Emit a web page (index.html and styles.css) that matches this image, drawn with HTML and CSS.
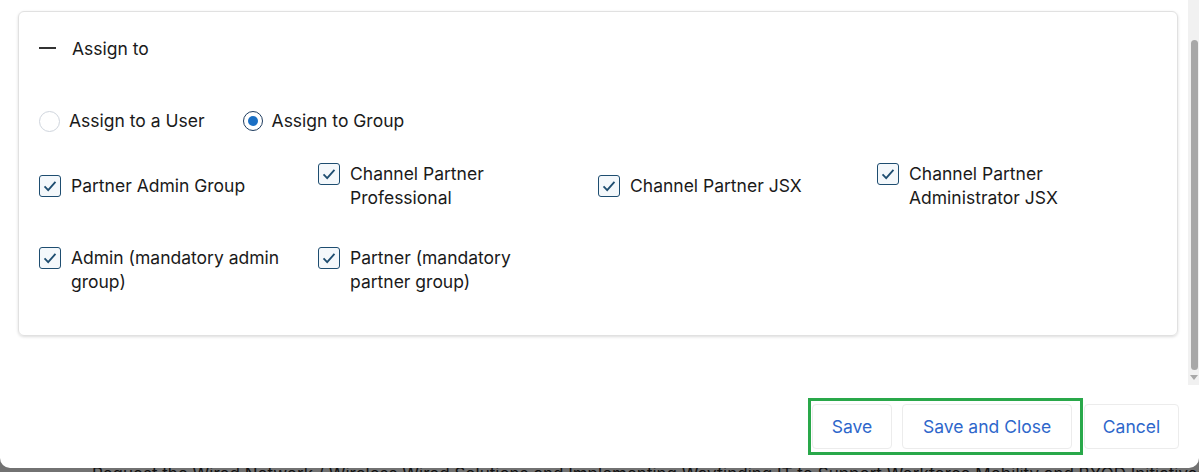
FILE: index.html
```html
<!DOCTYPE html>
<html>
<head>
<meta charset="utf-8">
<title>Assign to</title>
<link rel="stylesheet" href="styles.css">
</head>
<body>
<div class="modal">
  <div class="modal-body">
    <div class="scroll">
      <div class="card">
        <div class="card-head">
          <span class="dash"></span>
          <span class="title">Assign to</span>
        </div>

        <div class="radios">
          <label class="radio"><span class="dot"></span>Assign to a User</label>
          <label class="radio on"><span class="dot"></span>Assign to Group</label>
        </div>

        <div class="groups">
          <label class="check">
            <span class="box"><svg viewBox="0 0 22 22"><path d="M5 11.5l4 4 8-9"/></svg></span>
            <span class="text">Partner Admin Group</span>
          </label>
          <label class="check">
            <span class="box"><svg viewBox="0 0 22 22"><path d="M5 11.5l4 4 8-9"/></svg></span>
            <span class="text">Channel Partner Professional</span>
          </label>
          <label class="check">
            <span class="box"><svg viewBox="0 0 22 22"><path d="M5 11.5l4 4 8-9"/></svg></span>
            <span class="text">Channel Partner JSX</span>
          </label>
          <label class="check">
            <span class="box"><svg viewBox="0 0 22 22"><path d="M5 11.5l4 4 8-9"/></svg></span>
            <span class="text">Channel Partner Administrator JSX</span>
          </label>
          <label class="check">
            <span class="box"><svg viewBox="0 0 22 22"><path d="M5 11.5l4 4 8-9"/></svg></span>
            <span class="text">Admin (mandatory admin group)</span>
          </label>
          <label class="check">
            <span class="box"><svg viewBox="0 0 22 22"><path d="M5 11.5l4 4 8-9"/></svg></span>
            <span class="text">Partner (mandatory partner group)</span>
          </label>
        </div>
      </div>
    </div>

    <!-- scroll track on the right of the dialog -->
    <div class="scrollbar">
      <div class="thumb"></div>
      <div class="arrow"></div>
    </div>
  </div>

  <div class="footer">
    <div class="highlight">
      <button class="btn save">Save</button>
      <button class="btn save-close">Save and Close</button>
    </div>
    <button class="btn cancel">Cancel</button>
  </div>
</div>

<div class="behind">Request the Wired Network / Wireless Wired Solutions and Implementing Wayfinding IT to Support Workforce Mobility and BYOD Initiatives</div>
</body>
</html>
```

FILE: styles.css
```css
body{
    margin: 0;
    background-color: #727272;
    font-family: Inter, "Liberation Sans", sans-serif;
    color: #1a1a1a;
    overflow: hidden;
}
.modal{
    background-color: white;
    height: 468px;
    border-radius: 0 0 10px 10px;
    display: flex;
    flex-direction: column;
}
.modal-body{
    display: flex;
    height: 385px;
}
.scroll{
    flex: 1;
    padding: 11px 10px 0 18px;
}
.card{
    border: 1px solid #e1e1e1;
    border-radius: 6px;
    box-shadow: 0 1px 3px rgba(0, 0, 0, 0.14);
    padding: 24px 20px 41px 20px;
}
.card-head{
    display: flex;
    align-items: center;
    height: 24px;
}
.dash{
    width: 17px;
    height: 2px;
    background-color: #333;
    margin-right: 16px;
}
.title{
    font-size: 17.5px;
}

.radios{
    display: flex;
    gap: 38px;
    margin-top: 49px;
    font-size: 17.5px;
    line-height: 24px;
}
.radio{
    display: flex;
    align-items: center;
    gap: 9px;
}
.radio .dot{
    width: 19px;
    height: 19px;
    border: 1px solid #cfd5dd;
    border-radius: 50%;
    box-sizing: content-box;
    position: relative;
}
.radio.on .dot{
    border: 1.5px solid #1d3b5e;
    width: 18px;
    height: 18px;
}
.radio.on .dot::after{
    content: "";
    position: absolute;
    left: 4px;
    top: 4px;
    width: 10px;
    height: 10px;
    border-radius: 50%;
    background-color: #1a6fc4;
}

.groups{
    display: grid;
    grid-template-columns: 279px 280px 279px 280px;
    row-gap: 36px;
    align-items: center;
    margin-top: 29px;
    font-size: 17.5px;
    line-height: 24px;
}
.check{
    display: flex;
    align-items: flex-start;
    gap: 10px;
}
.check .box{
    flex: none;
    width: 20px;
    height: 20px;
    margin-top: 1px;
    border: 1.5px solid #1e4d70;
    border-radius: 3px;
    background-color: #f4f8fb;
    display: flex;
}
.check svg{
    width: 20px;
    height: 20px;
    fill: none;
    stroke: #1e4d70;
    stroke-width: 2;
}
.check .text{
    max-width: 214px;
}

.scrollbar{
    width: 13px;
    background-color: #f1f1f1;
    padding-top: 40px;
    box-sizing: border-box;
}
.thumb{
    width: 7px;
    height: 330px;
    margin-left: 3px;
    border-radius: 4px;
    background-color: #a8a8a8;
}
.arrow{
    width: 0;
    height: 0;
    margin: 5px 0 0 2px;
    border-left: 4.5px solid transparent;
    border-right: 4.5px solid transparent;
    border-top: 5px solid #a8a8a8;
}

.footer{
    flex: 1;
    display: flex;
    align-items: center;
    justify-content: flex-end;
    padding-right: 20px;
}
.highlight{
    display: flex;
    gap: 10px;
    border: 3px solid #29a84a;
    padding: 3px 8px 3px 1px;
}
.btn{
    height: 45px;
    background-color: white;
    border: 1px solid #ececec;
    border-radius: 4px;
    color: #2e67cb;
    font-family: Inter, "Liberation Sans", sans-serif;
    font-size: 17.5px;
}
.save{
    width: 80px;
}
.save-close{
    width: 170px;
}
.cancel{
    width: 95px;
    margin-left: 1px;
}

.behind{
    height: 4px;
    overflow: hidden;
    padding-left: 92px;
    font-size: 17px;
    line-height: 12px;
    color: #111;
    white-space: nowrap;
}
```
